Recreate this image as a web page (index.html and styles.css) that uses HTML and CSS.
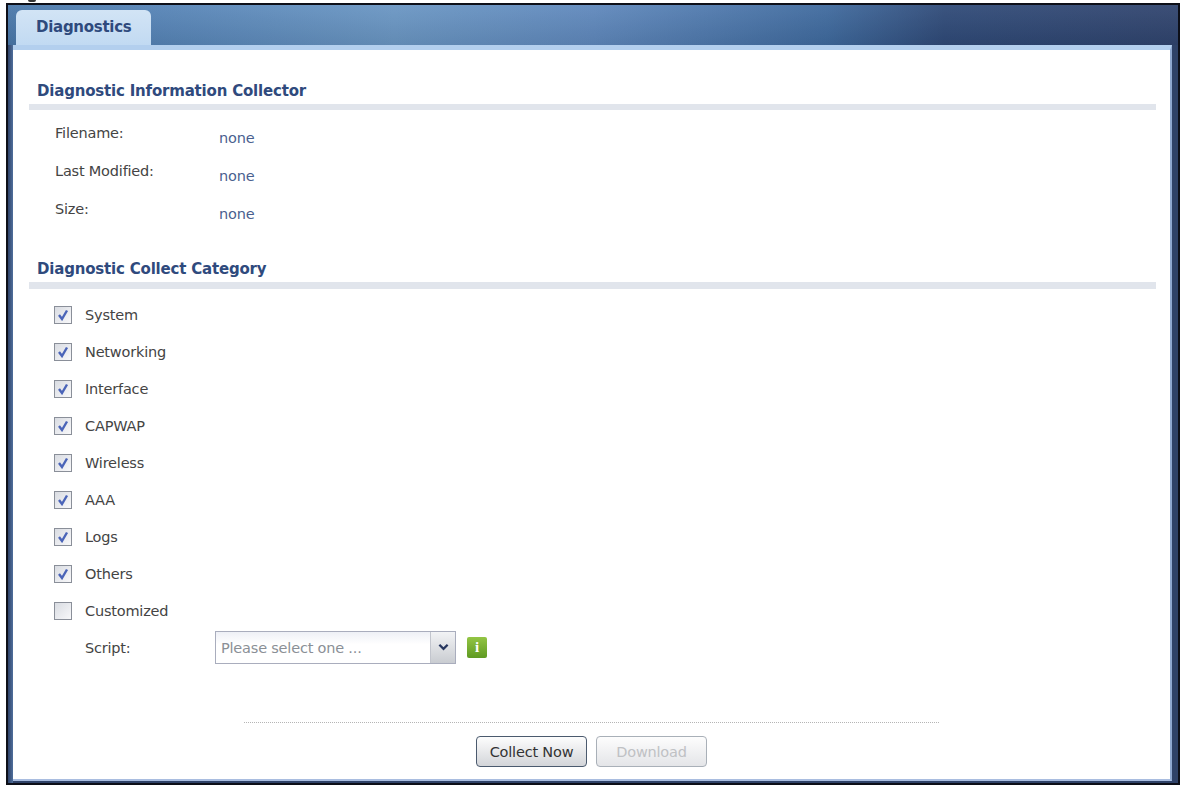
FILE: index.html
```html
<!DOCTYPE html>
<html lang="en">
  <head>
    <meta charset="UTF-8" />
    <title>Diagnostics</title>
    <link rel="stylesheet" href="styles.css">
  </head>
  <body>
    <div class="caption-mark"></div>
    <div class="frame">
      <div class="tab-bar">
        <div class="tab">Diagnostics</div>
      </div>
      <div class="panel">
        <h2 class="section-title first">Diagnostic Information Collector</h2>
        <div class="info-list">
          <div class="info-row"><span class="info-label">Filename:</span><span class="info-value">none</span></div>
          <div class="info-row"><span class="info-label">Last Modified:</span><span class="info-value">none</span></div>
          <div class="info-row"><span class="info-label">Size:</span><span class="info-value">none</span></div>
        </div>

        <h2 class="section-title second">Diagnostic Collect Category</h2>
        <div class="check-list">
          <div class="check-row"><span class="checkbox checked"><svg viewBox="0 0 12 12"><path d="M2 6 L5 10 L10 1.5" /></svg></span>System</div>
          <div class="check-row"><span class="checkbox checked"><svg viewBox="0 0 12 12"><path d="M2 6 L5 10 L10 1.5" /></svg></span>Networking</div>
          <div class="check-row"><span class="checkbox checked"><svg viewBox="0 0 12 12"><path d="M2 6 L5 10 L10 1.5" /></svg></span>Interface</div>
          <div class="check-row"><span class="checkbox checked"><svg viewBox="0 0 12 12"><path d="M2 6 L5 10 L10 1.5" /></svg></span>CAPWAP</div>
          <div class="check-row"><span class="checkbox checked"><svg viewBox="0 0 12 12"><path d="M2 6 L5 10 L10 1.5" /></svg></span>Wireless</div>
          <div class="check-row"><span class="checkbox checked"><svg viewBox="0 0 12 12"><path d="M2 6 L5 10 L10 1.5" /></svg></span>AAA</div>
          <div class="check-row"><span class="checkbox checked"><svg viewBox="0 0 12 12"><path d="M2 6 L5 10 L10 1.5" /></svg></span>Logs</div>
          <div class="check-row"><span class="checkbox checked"><svg viewBox="0 0 12 12"><path d="M2 6 L5 10 L10 1.5" /></svg></span>Others</div>
          <div class="check-row"><span class="checkbox"></span>Customized</div>
        </div>

        <div class="script-row">
          <span class="script-label">Script:</span>
          <div class="select">
            <span class="select-text">Please select one ...</span>
            <span class="select-arrow"><svg viewBox="0 0 12 8"><path d="M1.5 1.5 L6 6 L10.5 1.5" /></svg></span>
          </div>
          <span class="info-icon">i</span>
        </div>

        <div class="actions">
          <button class="btn">Collect Now</button>
          <button class="btn disabled">Download</button>
        </div>
      </div>
    </div>
  </body>
</html>
```

FILE: styles.css
```css
html,
body {
  margin: 0;
  height: 100%;
  background-color: #fff;
}

body {
  padding: 3px 1px 0 6px;
  box-sizing: border-box;
  font-family: "DejaVu Sans", sans-serif;
  font-size: 14.5px;
  color: #444;
  overflow: hidden;
}

/* the tail of a caption cropped off by the top edge */
.caption-mark {
  position: absolute;
  top: 0;
  left: 28px;
  width: 8px;
  height: 2px;
  border-radius: 0 0 4px 4px;
  background-color: #333;
}

.frame {
  height: 100%;
  box-sizing: border-box;
  border: 2px solid #0d0f18;
  background: linear-gradient(to right, #2f4268 0, #4f6f9c 5px, #2f4268 5px);
  display: flex;
  flex-direction: column;
  padding: 0 6px 2px 5px;
}

.tab-bar {
  height: 40px;
  margin: 0 -6px 0 -5px;
  padding: 5px 0 0 8px;
  box-sizing: border-box;
  background:
    linear-gradient(to bottom, rgba(255, 255, 255, 0.06), rgba(0, 0, 0, 0.08)),
    linear-gradient(to right, #4a78aa 0%, #5583b6 12%, #6a96c3 33%, #5f88bc 50%, #3f6a9e 70%, #2f4a78 80%, #30446e 100%);
  flex-shrink: 0;
}

.tab {
  width: 135px;
  height: 38px;
  box-sizing: border-box;
  padding: 8px 0 0 20px;
  background: linear-gradient(to bottom, #d2e4f5, #c0d9f2);
  border-radius: 6px 6px 0 0;
  font-weight: bold;
  font-size: 15px;
  letter-spacing: -0.27px;
  color: #2f4a7d;
  position: relative;
}

.panel {
  flex: 1;
  background-color: #fff;
  border-top: 5px solid #b3cfee;
  border-right: 2px solid #8fa8d0;
  border-bottom: 2px solid #a9bde0;
  display: flex;
  flex-direction: column;
  position: relative;
}

.section-title {
  margin: 0 14px 0 16px;
  padding: 0 0 3px 8px;
  border-bottom: 6px solid #e1e5ec;
  font-size: 15px;
  line-height: 20px;
  font-weight: bold;
  letter-spacing: -0.19px;
  color: #2f4a7d;
}

.section-title.first {
  margin-top: 31px;
}

.section-title.second {
  margin-top: 33px;
  border-bottom-width: 7px;
}

.info-list {
  padding-top: 2px;
}

.info-row {
  display: flex;
  height: 38px;
  align-items: flex-start;
  padding: 13px 0 0 42px;
  box-sizing: border-box;
  letter-spacing: -0.2px;
}

.info-label {
  width: 164px;
  flex-shrink: 0;
}

.info-value {
  margin-top: 5px;
  color: #4a5f8f;
}

.check-list {
  padding-top: 7px;
}

.check-row {
  display: flex;
  align-items: center;
  height: 37px;
  padding-left: 41px;
  letter-spacing: -0.2px;
}

.checkbox {
  width: 16px;
  height: 16px;
  margin-right: 13px;
  border: 1px solid #8a8f99;
  background: linear-gradient(135deg, #d9dce2, #f8f8fa);
  display: flex;
  align-items: center;
  justify-content: center;
  flex-shrink: 0;
}

.checkbox svg {
  width: 12px;
  height: 12px;
  fill: none;
  stroke: #4a64b8;
  stroke-width: 2.4;
}

.script-row {
  display: flex;
  align-items: center;
  height: 34px;
  margin-top: 1px;
  padding-left: 72px;
  letter-spacing: -0.2px;
}

.script-label {
  width: 130px;
  padding-top: 2px;
}

.select {
  width: 241px;
  height: 33px;
  box-sizing: border-box;
  border: 1px solid #a9adbd;
  background: linear-gradient(to bottom, #eef0f6, #fff 40%);
  display: flex;
  align-items: center;
}

.select-text {
  flex: 1;
  padding: 2px 0 0 5px;
  color: #8a8f96;
}

.select-arrow {
  width: 24px;
  height: 100%;
  background: linear-gradient(to bottom, #f2f3f5, #c9ccd1);
  border-left: 1px solid #c2c5cd;
  display: flex;
  align-items: center;
  justify-content: center;
}

.select-arrow svg {
  width: 11px;
  height: 8px;
  fill: none;
  stroke: #26365f;
  stroke-width: 2.5;
}

.info-icon {
  width: 20px;
  height: 21px;
  margin-left: 11px;
  border-radius: 2px;
  background: linear-gradient(to bottom, #93c544, #5f9a22);
  color: #fff;
  font-family: "Liberation Serif", serif;
  font-weight: bold;
  font-size: 15px;
  line-height: 21px;
  text-align: center;
}

.actions {
  margin: auto 231px 12px;
  padding-top: 13px;
  border-top: 1px dotted #b5b5b5;
  display: flex;
  justify-content: center;
  gap: 9px;
}

.btn {
  width: 111px;
  height: 31px;
  border: 1px solid #4b5a6e;
  border-radius: 4px;
  background: linear-gradient(to bottom, #fdfdfd, #d3d5d9);
  font-family: "DejaVu Sans", sans-serif;
  font-size: 14.5px;
  letter-spacing: -0.2px;
  color: #333;
  padding: 0;
}

.btn.disabled {
  border-color: #a9b0b8;
  color: #bfc1c4;
  background: linear-gradient(to bottom, #fdfdfd, #e4e5e8);
}
```
